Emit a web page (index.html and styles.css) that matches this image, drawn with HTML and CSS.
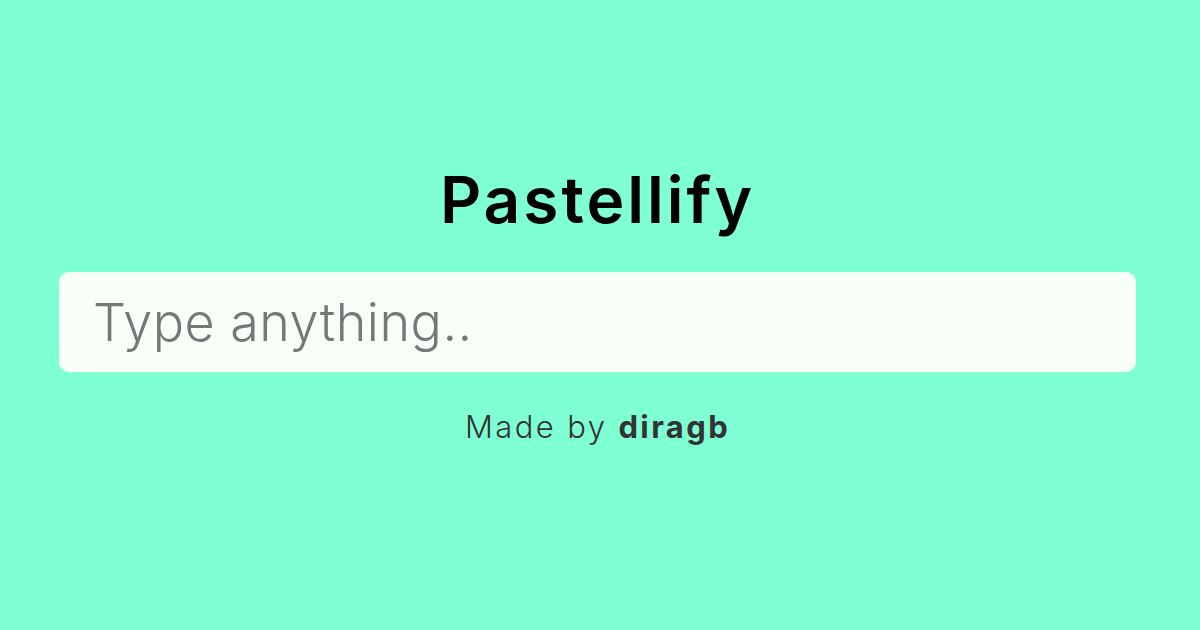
FILE: index.html
```html
<!DOCTYPE html>
<html lang="en">
<head>
<meta charset="utf-8">
<title>Pastellify</title>
<link rel="stylesheet" href="styles.css">
</head>
<body>
<main class="page">
  <h1 class="title">Pastellify</h1>
  <input class="search" type="text" placeholder="Type anything..">
  <p class="credit">Made by <strong class="author">diragb</strong></p>
</main>
</body>
</html>
```

FILE: styles.css
```css
html, body {
  margin: 0;
  padding: 0;
  height: 100%;
  background: #7fffd4;
}
.page {
  box-sizing: border-box;
  height: 630px;
  padding-right: 5px;
  display: flex;
  flex-direction: column;
  align-items: center;
  justify-content: flex-start;
  padding-top: 160px;
  font-family: Inter, "Liberation Sans", sans-serif;
}
.title {
  margin: 0;
  font-size: 64px;
  line-height: 80px;
  font-weight: 600;
  letter-spacing: 3px;
  color: #000;
}
.search {
  box-sizing: border-box;
  width: 1077px;
  height: 100px;
  margin-top: 32px;
  padding: 0 34px;
  border: none;
  border-radius: 10px;
  background: #f8fff9;
  font-family: Inter, "Liberation Sans", sans-serif;
  font-size: 52px;
  font-weight: 300;
  letter-spacing: 0.5px;
  color: #222;
  outline: none;
}
.search::placeholder {
  color: #777;
  opacity: 1;
}
.credit {
  margin: 35px 0 0;
  font-size: 31px;
  line-height: 40px;
  font-weight: 300;
  letter-spacing: 2.4px;
  color: #333;
}
.author {
  font-weight: 700;
}
```
